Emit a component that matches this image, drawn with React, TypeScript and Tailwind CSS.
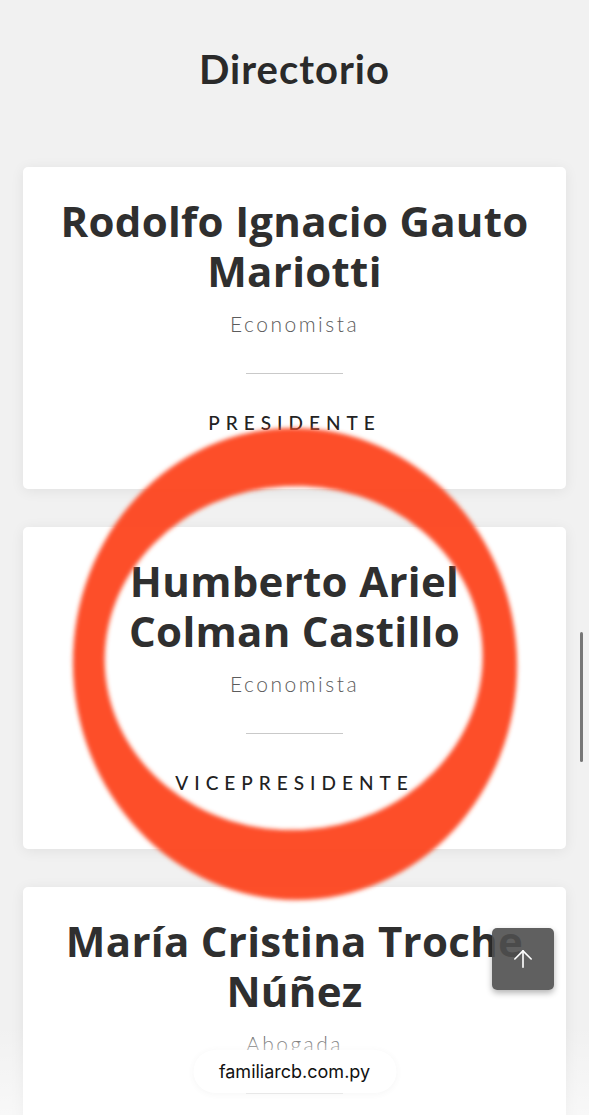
import { FiArrowUp } from "react-icons/fi";

interface Member {
	name: string[];
	profession: string;
	role: string;
}

const members: Member[] = [
	{
		name: ["Rodolfo Ignacio Gauto", "Mariotti"],
		profession: "Economista",
		role: "PRESIDENTE",
	},
	{
		name: ["Humberto Ariel", "Colman Castillo"],
		profession: "Economista",
		role: "VICEPRESIDENTE",
	},
	{
		name: ["María Cristina Troche", "Núñez"],
		profession: "Abogada",
		role: "SECRETARIA",
	},
];

const MemberCard: React.FC<{ member: Member }> = ({ member }) => {
	return (
		<div className="flex flex-col items-center rounded-[5px] bg-white px-4 pt-[29px] pb-[54px] text-center shadow-[0_2px_14px_rgba(0,0,0,0.07)]">
			<h3 className="font-['Open_Sans',sans-serif] text-[42px] leading-[50px] font-bold tracking-[0.3px] text-[#2f2f2f]">
				{member.name[0]}
				<br />
				{member.name[1]}
			</h3>
			<div className="mt-[14px] font-['Lato',sans-serif] text-[21px] leading-[28px] font-light tracking-[2.5px] text-[#5c5c5c]">
				{member.profession}
			</div>
			<div className="mt-[35px] h-px w-[97px] bg-[#c9c9c9]" />
			<div className="mt-[37px] font-['Lato',sans-serif] text-[19px] leading-[24px] font-medium tracking-[6px] text-[#222]">
				{member.role}
			</div>
		</div>
	);
};

export default function App() {
	return (
		<div className="relative h-[1115px] w-[589px] overflow-hidden bg-[#f1f1f1]">
			<main className="flex flex-col px-[23px] pt-[46px]">
				<h2 className="text-center font-['Lato',sans-serif] text-[40px] leading-[46px] font-bold tracking-[1px] text-[#2a2a2a]">
					Directorio
				</h2>
				<div className="mt-[75px] flex flex-col gap-[38px]">
					{members.map((member) => (
						<MemberCard key={member.role} member={member} />
					))}
				</div>
			</main>

			{/* hand-drawn highlight ring */}
			<svg
				className="pointer-events-none absolute top-0 left-0"
				width={589}
				height={1115}
				viewBox="0 0 589 1115"
			>
				<defs>
					<filter id="soft" x="-10%" y="-10%" width="120%" height="120%">
						<feGaussianBlur stdDeviation="2" />
					</filter>
				</defs>
				<path
					fillRule="evenodd"
					fill="#fd4720"
					fillOpacity={0.97}
					filter="url(#soft)"
					transform="rotate(-3 295 664)"
					d="M 73 664 A 222 236 0 1 0 517 664 A 222 236 0 1 0 73 664 Z M 105 658 A 189 172 0 1 0 483 658 A 189 172 0 1 0 105 658 Z"
				/>
			</svg>

			{/* scrollbar */}
			<div className="absolute top-[632px] right-[6px] h-[130px] w-[3px] rounded-full bg-[#777]" />

			{/* back to top */}
			<button className="absolute top-[928px] right-[35px] flex h-[62px] w-[62px] items-center justify-center rounded-[5px] bg-[#4f4f4f]/90 text-white shadow-[0_3px_6px_rgba(0,0,0,0.3)]">
				<FiArrowUp className="h-[28px] w-[28px]" strokeWidth={1.4} />
			</button>

			{/* bottom fade */}
			<div className="pointer-events-none absolute bottom-0 left-0 h-[90px] w-full bg-gradient-to-b from-white/0 to-white/50" />

			{/* url pill */}
			<div className="absolute bottom-[22px] left-1/2 flex h-[43px] w-[203px] -translate-x-1/2 items-center justify-center rounded-full bg-white shadow-[0_0_18px_rgba(255,255,255,0.9),0_1px_6px_rgba(0,0,0,0.06)]">
				<span className="font-['Inter',sans-serif] text-[18px] text-[#111]">
					familiarcb.com.py
				</span>
			</div>
		</div>
	);
}
